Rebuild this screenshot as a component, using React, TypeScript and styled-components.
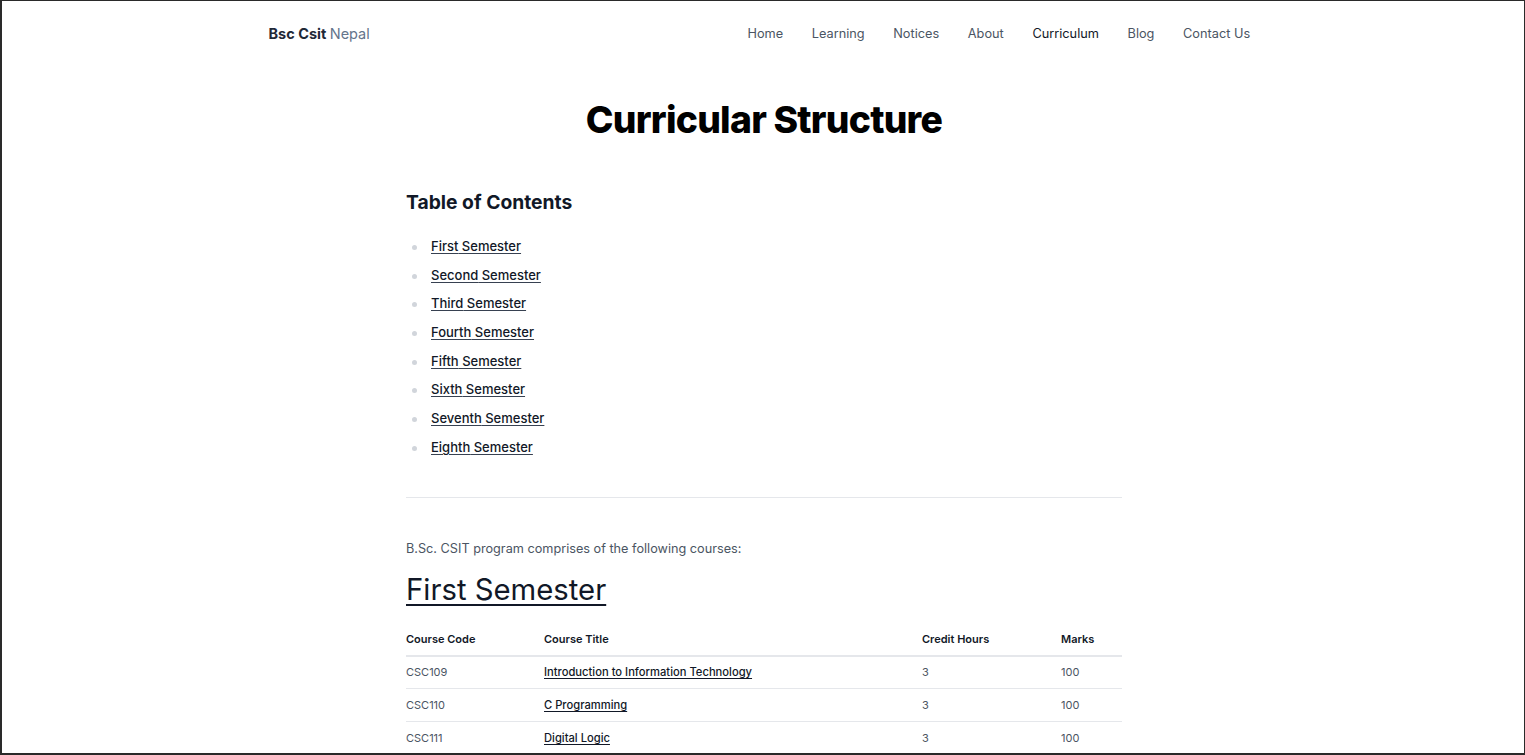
import React from "react";
import styled, { createGlobalStyle } from "styled-components";

const Global = createGlobalStyle`
  html, body { margin: 0; padding: 0; background: #fff; }
  body { font-family: Inter, "Noto Sans", sans-serif; color: #111827; -webkit-font-smoothing: antialiased; }
  * { box-sizing: border-box; }
`;

const Frame = styled.div`
  position: fixed;
  inset: 0;
  pointer-events: none;
  border-top: 1px solid #2a2a2a;
  border-left: 2px solid #2a2a2a;
  border-right: 1px solid #2a2a2a;
  border-bottom: 2px solid #2a2a2a;
  z-index: 10;
`;

const Header = styled.header`
  max-width: 1024px;
  margin: 0 auto;
  padding: 0 16px;
  height: 66px;
  display: flex;
  align-items: center;
  justify-content: space-between;
`;

const Logo = styled.a`
  font-size: 14.5px;
  font-weight: 700;
  color: #1f2937;
  text-decoration: none;
  padding-left: 2px;
  span { font-weight: 400; color: #64748b; }
`;

const Nav = styled.nav`
  display: flex;
  margin-right: -6px;
`;

const NavLink = styled.a<{ $active?: boolean }>`
  font-size: 12.75px;
  color: ${(p) => (p.$active ? "#111827" : "#4b5563")};
  font-weight: 400;
  text-decoration: none;
  padding: 8px 14.3px;
`;

const Main = styled.main`
  width: 716px;
  margin: 0 auto;
  padding-top: 32px;
  padding-bottom: 16px;
  position: relative;
  left: 1.5px;
`;

const Title = styled.h1`
  margin: 0;
  text-align: center;
  font-size: 37.3px;
  font-weight: 800;
  letter-spacing: -0.02em;
  line-height: 44px;
  color: #000;
`;

const TocHeading = styled.h3`
  margin: 46px 0 0;
  font-size: 19.3px;
  font-weight: 700;
  line-height: 28px;
  color: #111827;
`;

const TocList = styled.ul`
  list-style: none;
  margin: 16px 0 0;
  padding: 0;
`;

const TocItem = styled.li`
  position: relative;
  padding-left: 25px;
  height: 28.7px;
  line-height: 28.7px;
  font-size: 13px;
  &::before {
    content: "";
    position: absolute;
    left: 6px;
    top: 13px;
    width: 5px;
    height: 5px;
    border-radius: 50%;
    background: #d1d5db;
  }
`;

const TocLink = styled.a`
  color: #111827;
  font-weight: 500;
  text-decoration: underline;
  text-underline-offset: 2px;
  text-decoration-color: #374151;
`;

const Rule = styled.hr`
  border: 0;
  border-top: 1px solid #e5e7eb;
  margin: 35px 0 0;
`;

const Intro = styled.p`
  margin: 40px 0 0;
  font-size: 12.7px;
  line-height: 22px;
  color: #4b5563;
`;

const SemesterHeading = styled.h2`
  margin: 10px 0 0;
  font-size: 29.3px;
  font-weight: 400;
  line-height: 40px;
  a {
    color: #111827;
    text-decoration: underline;
    text-underline-offset: 4px;
    text-decoration-thickness: 2px;
  }
`;

const Table = styled.table`
  width: 100%;
  border-collapse: collapse;
  margin-top: 18px;
  font-size: 11px;
`;

const Th = styled.th<{ $w: number }>`
  width: ${(p) => p.$w}px;
  text-align: left;
  font-weight: 600;
  color: #111827;
  padding: 0 0 9px;
  height: 28px;
  vertical-align: bottom;
  border-bottom: 2px solid #e5e7eb;
`;

const Tr = styled.tr`
  border-bottom: 1px solid #e5e7eb;
`;

const Td = styled.td`
  height: 33px;
  padding: 0;
  color: #4b5563;
  vertical-align: middle;
`;

const CourseLink = styled.a`
  color: #111827;
  font-size: 11.2px;
  font-weight: 500;
  text-decoration: underline;
  text-underline-offset: 2px;
`;

const navItems = ["Home", "Learning", "Notices", "About", "Curriculum", "Blog", "Contact Us"];
const semesters = ["First", "Second", "Third", "Fourth", "Fifth", "Sixth", "Seventh", "Eighth"];
const courses = [
  { code: "CSC109", title: "Introduction to Information Technology", ch: 3, marks: 100 },
  { code: "CSC110", title: "C Programming", ch: 3, marks: 100 },
  { code: "CSC111", title: "Digital Logic", ch: 3, marks: 100 },
];

export default function App() {
  return (
    <>
      <Global />
      <Frame />
      <Header>
        <Logo href="#">
          Bsc Csit <span>Nepal</span>
        </Logo>
        <Nav>
          {navItems.map((n) => (
            <NavLink key={n} href="#" $active={n === "Curriculum"}>
              {n}
            </NavLink>
          ))}
        </Nav>
      </Header>
      <Main>
        <Title>Curricular Structure</Title>
        <TocHeading>Table of Contents</TocHeading>
        <TocList>
          {semesters.map((s) => (
            <TocItem key={s}>
              <TocLink href="#">{s} Semester</TocLink>
            </TocItem>
          ))}
        </TocList>
        <Rule />
        <Intro>B.Sc. CSIT program comprises of the following courses:</Intro>
        <SemesterHeading>
          <a href="#">First Semester</a>
        </SemesterHeading>
        <Table>
          <thead>
            <tr>
              <Th $w={138}>Course Code</Th>
              <Th $w={378}>Course Title</Th>
              <Th $w={139}>Credit Hours</Th>
              <Th $w={61}>Marks</Th>
            </tr>
          </thead>
          <tbody>
            {courses.map((c) => (
              <Tr key={c.code}>
                <Td>{c.code}</Td>
                <Td>
                  <CourseLink href="#">{c.title}</CourseLink>
                </Td>
                <Td>{c.ch}</Td>
                <Td>{c.marks}</Td>
              </Tr>
            ))}
          </tbody>
        </Table>
      </Main>
    </>
  );
}
